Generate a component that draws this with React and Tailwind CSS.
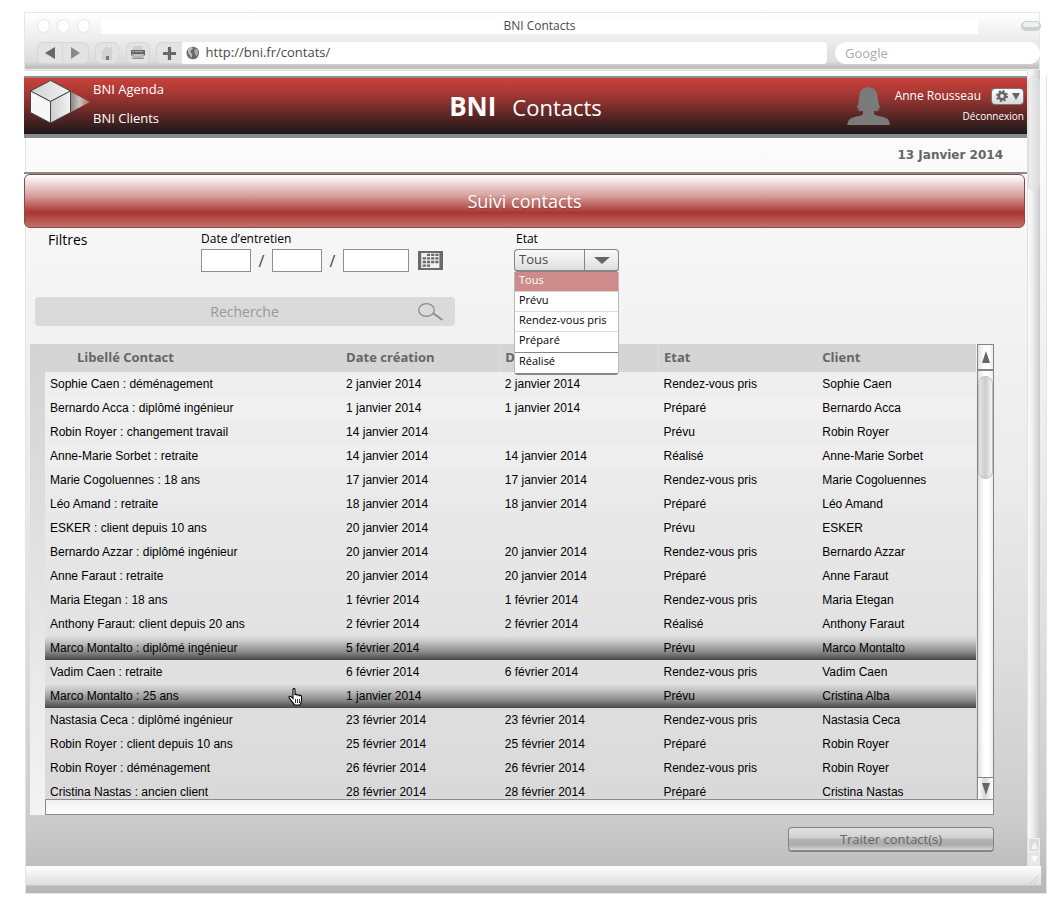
import React from "react";

const rows = [
  ["Sophie Caen : déménagement", "2 janvier 2014", "2 janvier 2014", "Rendez-vous pris", "Sophie Caen"],
  ["Bernardo Acca : diplômé ingénieur", "1 janvier 2014", "1 janvier 2014", "Préparé", "Bernardo Acca"],
  ["Robin Royer : changement travail", "14 janvier 2014", "", "Prévu", "Robin Royer"],
  ["Anne-Marie Sorbet : retraite", "14 janvier 2014", "14 janvier 2014", "Réalisé", "Anne-Marie Sorbet"],
  ["Marie Cogoluennes : 18 ans", "17 janvier 2014", "17 janvier 2014", "Rendez-vous pris", "Marie Cogoluennes"],
  ["Léo Amand : retraite", "18 janvier 2014", "18 janvier 2014", "Préparé", "Léo Amand"],
  ["ESKER : client depuis 10 ans", "20 janvier 2014", "", "Prévu", "ESKER"],
  ["Bernardo Azzar : diplômé ingénieur", "20 janvier 2014", "20 janvier 2014", "Rendez-vous pris", "Bernardo Azzar"],
  ["Anne Faraut : retraite", "20 janvier 2014", "20 janvier 2014", "Préparé", "Anne Faraut"],
  ["Maria Etegan : 18 ans", "1 février 2014", "1 février 2014", "Rendez-vous pris", "Maria Etegan"],
  ["Anthony Faraut: client depuis 20 ans", "2 février 2014", "2 février 2014", "Réalisé", "Anthony Faraut"],
  ["Marco Montalto : diplômé ingénieur", "5 février 2014", "", "Prévu", "Marco Montalto"],
  ["Vadim Caen : retraite", "6 février 2014", "6 février 2014", "Rendez-vous pris", "Vadim Caen"],
  ["Marco Montalto : 25 ans", "1 janvier 2014", "", "Prévu", "Cristina Alba"],
  ["Nastasia Ceca : diplômé ingénieur", "23 février 2014", "23 février 2014", "Rendez-vous pris", "Nastasia Ceca"],
  ["Robin Royer : client depuis 10 ans", "25 février 2014", "25 février 2014", "Préparé", "Robin Royer"],
  ["Robin Royer : déménagement", "26 février 2014", "26 février 2014", "Rendez-vous pris", "Robin Royer"],
  ["Cristina Nastas : ancien client", "28 février 2014", "28 février 2014", "Préparé", "Cristina Nastas"],
];
const selected = [11, 13];
const states = ["Tous", "Prévu", "Rendez-vous pris", "Préparé", "Réalisé"];

function ToolButton({ label, className, children }) {
  return (
    <button
      type="button"
      aria-label={label}
      className={"flex h-[22px] items-center justify-center border border-[#d6d6d6] bg-[#e3e3e3] " + className}
    >
      {children}
    </button>
  );
}

function BrowserBar() {
  return (
    <header className="mr-[7px] flex flex-col gap-2 border border-b-[#dedede] border-[#e6e6e6] bg-[linear-gradient(#ffffff_0%,#ededed_45%,#dcdcdc_85%,#b9b9b9_97%,#ffffff_100%)] pt-[5px] pb-[6px]">
      <div className="flex h-4 items-center">
        <div className="ml-3 flex gap-[7px]">
          <span className="h-[14px] w-[13px] rounded-full border border-[#e4e4e4] bg-white" />
          <span className="h-[14px] w-[13px] rounded-full border border-[#e4e4e4] bg-white" />
          <span className="h-[14px] w-[13px] rounded-full border border-[#e4e4e4] bg-white" />
        </div>
        <div className="ml-[11px] flex h-4 flex-1 items-center justify-center bg-white text-xs text-[#4a4a4a]">BNI Contacts</div>
        <button
          type="button"
          aria-label="Barre d’outils"
          className="-mr-[2px] ml-[43px] h-[10px] w-5 rounded-md border-2 border-t border-b-4 border-[#cdd0d0] bg-[#eef1f1]"
        />
      </div>
      <div className="flex h-[22px] items-center">
        <ToolButton label="Page précédente" className="ml-3 w-[26px] rounded-l-md">
          <svg width="10" height="12" viewBox="0 0 10 12"><path d="M10 0v12L0 6z" fill="#666" /></svg>
        </ToolButton>
        <ToolButton label="Page suivante" className="w-[26px] rounded-r-md border-l-0">
          <svg width="10" height="12" viewBox="0 0 10 12"><path d="M0 0v12l9-6z" fill="#8a8a8a" /></svg>
        </ToolButton>
        <ToolButton label="Accueil" className="ml-[6px] w-6 rounded-md">
          <svg width="14" height="14" viewBox="0 0 14 14">
            <path d="M7 0 0 7h2v7h10V7h2l-2-2V1h-2v2z" fill="#d2d2d2" />
            <path d="M6 10h3v4H6z" fill="#777" />
          </svg>
        </ToolButton>
        <ToolButton label="Imprimer" className="ml-[7px] w-6 rounded-md">
          <svg width="14" height="14" viewBox="0 0 14 14">
            <path d="M2 0h10v4H2z" fill="#d0d0d0" />
            <path d="M0 4h14v5.500h-1.500v-1.500h-11v1.500H0z" fill="#666" />
            <path d="M1 5.500h2M4 5.500h8" stroke="#bbb" strokeWidth=".8" />
            <path d="M2.500 9h9l1 3.500h-11z" fill="#fff" stroke="#777" strokeWidth=".8" />
            <path d="M3 11h8" stroke="#666" />
          </svg>
        </ToolButton>
        <ToolButton label="Ajouter un signet" className="ml-[6px] w-[26px] rounded-l-md border-r-0">
          <svg width="13" height="13" viewBox="0 0 13 13"><path d="M6.500 0v13M0 6.500h13" stroke="#666" strokeWidth="3.200" /></svg>
        </ToolButton>
        <label className="flex h-[22px] flex-1 items-center gap-[6px] rounded-r bg-white pl-1">
          <svg width="14" height="14" viewBox="0 0 14 14" aria-hidden="true">
            <circle cx="7" cy="7" r="6.500" fill="#666" />
            <path d="M2 3c1-1.500 3-2.300 4-2.300l1.200 1.800L5.500 4l-1 2L6.500 8 6 11 5 12.500 4 9.500 2 7z" fill="#b9b9b9" />
            <path d="M9 2.500l2.500.8L13 6l-1 3-1.500 1.500L9.500 8 8.500 6.500l.2-2z" fill="#a8a8a8" />
          </svg>
          <input
            type="text"
            aria-label="Adresse"
            defaultValue="http://bni.fr/contats/"
            className="w-full min-w-0 bg-transparent text-[13px] text-[#4a4a4a] outline-none"
          />
        </label>
        <input
          type="search"
          aria-label="Recherche Google"
          placeholder="Google"
          className="-mr-px ml-2 h-[22px] w-[205px] rounded-full bg-white px-[10px] text-[13px] outline-none placeholder:text-[#ababab]"
        />
      </div>
    </header>
  );
}

function Cube() {
  return (
    <svg width="62" height="46" viewBox="0 0 62 46" aria-hidden="true" className="shrink-0">
      <defs>
        <linearGradient id="beak"><stop offset="0" stopColor="#8f8585" /><stop offset=".45" stopColor="#c9c4c4" /><stop offset="1" stopColor="#a86660" /></linearGradient>
        <linearGradient id="cubeTop"><stop offset="0" stopColor="#d2d2d2" /><stop offset="1" stopColor="#f2f2f2" /></linearGradient>
        <linearGradient id="cubeSide"><stop offset="0" stopColor="#cdcdcd" /><stop offset="1" stopColor="#f4f4f4" /></linearGradient>
      </defs>
      <path d="M42 13 61 23 42 33z" fill="url(#beak)" />
      <g stroke="#454545" strokeWidth="1" strokeLinejoin="round">
        <path d="M21.500 1.500 41.500 12 21.500 22.500 1.500 12z" fill="url(#cubeTop)" />
        <path d="M1.500 12 21.500 22.500V44L1.500 33.500z" fill="#f7f7f7" />
        <path d="M41.500 12 21.500 22.500V44l20-10.500z" fill="url(#cubeSide)" />
      </g>
    </svg>
  );
}

function AppHeader() {
  return (
    <div className="-ml-[2px] grid h-[62px] grid-cols-[1fr_auto_1fr] border-t-2 border-b-4 border-t-[#8b8d8d] border-b-[#8b8b8b] bg-[linear-gradient(#cf433c,#a33733_30%,#1d1819_93%)] bg-origin-border text-white">
      <div className="flex pt-px pl-[5px]">
        <Cube />
        <nav className="flex flex-col gap-[11px] pl-[2px] text-[13px] leading-[18px]">
          <a href="#agenda" className="pt-px">BNI Agenda</a>
          <a href="#clients">BNI Clients</a>
        </nav>
      </div>
      <h1 className="flex items-baseline gap-4 pt-2 leading-10">
        <span className="text-[26px] font-bold">BNI</span>
        <span className="text-[22px]">Contacts</span>
      </h1>
      <div className="flex justify-end gap-[5px] pt-[9px] pr-[3px]">
        <svg width="43" height="38" viewBox="0 0 43 38" aria-hidden="true" className="shrink-0">
          <path d="M21.300.3c-6 0-9 4-9.300 10-.2 4-.3 7-2.500 10.500l2.500-.5-2.200 2.700 3-.7-1.300 2.200 4.500-.8v3.500c-2 2.500-11 2-13.500 5.300C1 34 .4 36 .4 38h42.400c0-2-.5-4-1.600-5.500C38.700 29.500 29 29.500 27 27v-3.300l4.300.8-1.300-2.200 3 .6-1.800-2.500 2.500.4C31.500 18 31 14 30.700 10.300 30.300 4.300 27.300.3 21.300.3z" fill="#7b7b7b" />
        </svg>
        <div className="flex flex-col items-end gap-[3px]">
          <div className="flex items-center gap-[10px]">
            <span className="text-xs leading-[18px]">Anne Rousseau</span>
            <button type="button" aria-label="Paramètres" className="flex h-[17px] w-[33px] items-center justify-center gap-1 rounded border border-[#777] bg-linear-to-b from-white to-[#d8d8d8]">
              <svg width="12" height="12" viewBox="0 0 12 12">
                <circle cx="6" cy="6" r="3.200" fill="none" stroke="#666" strokeWidth="2.600" />
                <circle cx="6" cy="6" r="5" fill="none" stroke="#666" strokeWidth="2" strokeDasharray="2 1.927" />
              </svg>
              <svg width="8" height="7" viewBox="0 0 8 7"><path d="M0 0h8L4 7z" fill="#666" /></svg>
            </button>
          </div>
          <a href="#deconnexion" className="text-[10px] leading-4">Déconnexion</a>
        </div>
      </div>
    </div>
  );
}

function Filters() {
  return (
    <form className="pl-[9px]">
      <div className="grid grid-cols-[153px_313px_auto] pt-[3px] pl-[13px]">
        <h3 className="text-sm leading-[18px] text-black">Filtres</h3>
        <fieldset>
          <legend className="mb-[3px] text-xs leading-[15px] text-black">Date d’entretien</legend>
          <div className="flex h-[23px] items-center text-base text-[#444]">
            <input type="text" aria-label="Jour" className="h-[23px] w-[50px] border border-[#8f8f8f] bg-white px-1 text-xs" />
            <span className="w-[21px] text-center">/</span>
            <input type="text" aria-label="Mois" className="h-[23px] w-[50px] border border-[#8f8f8f] bg-white px-1 text-xs" />
            <span className="w-[21px] text-center">/</span>
            <input type="text" aria-label="Année" className="h-[23px] w-[66px] border border-[#8f8f8f] bg-white px-1 text-xs" />
            <button type="button" aria-label="Ouvrir le calendrier" className="ml-[9px]">
              <svg width="25" height="19" viewBox="0 0 25 19" className="block">
                <path d="M0 0h25v19H0z" fill="#6a6a6a" />
                <path d="M3.200 2h18.200v15H3.200z" fill="#f1f1f1" />
                <g stroke="#6a6a6a" strokeWidth="2.300" strokeDasharray="3.200 1">
                  <path d="M8.900 3.900h12M4.700 7.400h16.200M4.700 11h16.200M4.700 14.600h7.800" />
                </g>
              </svg>
            </button>
          </div>
        </fieldset>
        <div className="text-xs">
          <label htmlFor="etat" className="mb-[3px] block pl-[2px] leading-[15px] text-black">Etat</label>
          <div className="relative z-10 w-[105px]">
            <select
              id="etat"
              defaultValue="Tous"
              className="block h-[23px] w-full appearance-none rounded border border-b-2 border-[#858585] bg-linear-to-b from-[#fafafa] to-[#dedede] pl-1 text-[13px] text-[#4a4a4a]"
            >
              {states.map((s) => (
                <option key={s}>{s}</option>
              ))}
            </select>
            <span className="pointer-events-none absolute top-px right-px flex h-5 w-[34px] items-center justify-center border-l border-[#858585]">
              <svg width="16" height="7" viewBox="0 0 16 7"><path d="M0 0h16L8 7z" fill="#666" /></svg>
            </span>
            <ul role="listbox" aria-label="Etat" className="absolute top-full left-0 w-full rounded-b border border-t-0 border-b-2 border-[#b9b9b9] border-b-[#858585] bg-white text-[11px] leading-4 text-black">
              {states.map((s, i) => (
                <li
                  key={s}
                  role="option"
                  aria-selected={i === 0}
                  className={
                    "border-b pl-1 " +
                    (i === 0
                      ? "h-5 border-[#e0d0d0] bg-[#cd8b8b] text-white"
                      : i === 3
                        ? "h-[21px] border-[#858585]"
                        : i === 4
                          ? "h-5 border-white"
                          : "h-5 border-[#dcdcdc]")
                  }
                >
                  {s}
                </li>
              ))}
            </ul>
          </div>
        </div>
      </div>
      <label className="mt-[25px] flex h-[29px] w-[420px] items-center rounded bg-[#dadada] pr-3">
        <input
          type="text"
          aria-label="Recherche"
          placeholder="Recherche"
          className="h-full min-w-0 flex-1 bg-transparent pl-9 text-center text-sm outline-none placeholder:text-[#989898]"
        />
        <svg width="25" height="18" viewBox="0 0 25 18" aria-hidden="true" fill="none" stroke="#8a8a8a" strokeWidth="1.200">
          <ellipse cx="8.500" cy="7" rx="7.800" ry="6.300" />
          <path d="M15.500 10.500 24.500 17" strokeWidth="1.600" />
        </svg>
      </label>
    </form>
  );
}

function ContactRow({ row, index }) {
  const isSelected = selected.includes(index);
  const tone = isSelected
    ? "bg-[linear-gradient(#e0e0e0,#c4c4c4_25%,#8c8c8c_65%,#484848)]"
    : index === 1 || index === 3
      ? "bg-white/15"
      : "";
  return (
    <tr>
      {row.map((cell, c) => (
        <td key={c} className={"relative h-6 truncate p-0 pl-[5px] " + tone}>
          {cell}
          {index === 13 && c === 0 && (
            <svg width="15" height="18" viewBox="0 0 15 18" aria-hidden="true" className="absolute top-1 right-[38px]">
              <path
                d="M5 1.500c0-1.300 2-1.300 2 0V7c.3-1 2-.9 2.200.2.500-.8 2-.6 2.200.5.700-.6 2.100-.3 2.100.8v4c0 1.500-1 2.500-1.300 4.500H6.300C5.500 14.500 3 12.500 1.300 10.300.3 8.800 1.800 7.700 3 8.700l2 1.800z"
                fill="#fff"
                stroke="#000"
                strokeWidth="1.100"
              />
              <path d="M7.500 11v4M9.500 11v4M11.500 11v4" stroke="#000" strokeWidth=".8" />
            </svg>
          )}
        </td>
      ))}
    </tr>
  );
}

function ContactTable() {
  return (
    <section className="mt-[18px] mr-[33px] ml-1 flex bg-linear-to-b from-[#d3d3d3] to-[#f3f3f3] bg-[length:15px_100%] bg-no-repeat pl-[15px]">
      <div className="min-w-0 flex-1">
        <div className="flex h-[455px]">
          <div className="min-w-0 flex-1 overflow-hidden bg-[linear-gradient(#f0f0f0,#ededed_20%,#d9d9d9)]">
            <table className="w-full table-fixed border-collapse font-['Liberation_Sans',Arial,sans-serif] text-xs text-black">
              <colgroup>
                <col className="w-[31.8%]" />
                <col />
                <col />
                <col />
                <col />
              </colgroup>
              <thead className="bg-[#d5d5d5] text-left font-['Open_Sans',sans-serif] text-[13px] text-[#666]">
                <tr>
                  <th className="h-7 p-0 pl-8 font-bold">Libellé Contact</th>
                  <th className="p-0 pl-[5px] font-bold">Date création</th>
                  <th className="border-l border-[#dddddd] p-0 pl-[5px] font-bold">Date entretien</th>
                  <th className="border-l border-[#dddddd] p-0 pl-[5px] font-bold">Etat</th>
                  <th className="p-0 pl-[5px] font-bold">Client</th>
                </tr>
              </thead>
              <tbody>
                {rows.map((row, i) => (
                  <ContactRow key={i} row={row} index={i} />
                ))}
              </tbody>
            </table>
          </div>
          <div className="ml-px flex w-[17px] flex-col border border-b-0 border-[#858585] bg-[linear-gradient(90deg,#e0e0e0,#ffffff_40%,#ffffff_70%,#ececec)]">
            <button type="button" aria-label="Défiler vers le haut" className="flex h-[26px] items-center justify-center border-b-2 border-[#858585]">
              <svg width="8" height="12" viewBox="0 0 8 12"><path d="M4 0l4 12H0z" fill="#666" /></svg>
            </button>
            <div className="mt-[5px] h-[103px] rounded-full border border-[#bdbdbd] bg-[linear-gradient(90deg,#e6e6e6,#cccccc_50%,#f5f5f5)]" />
            <button type="button" aria-label="Défiler vers le bas" className="mt-auto flex h-[22px] items-center justify-center border-t border-[#858585] bg-[linear-gradient(90deg,#ffffff,#d8d8d8_45%,#ffffff)]">
              <svg width="8" height="12" viewBox="0 0 8 12"><path d="M0 0h8L4 12z" fill="#666" /></svg>
            </button>
          </div>
        </div>
        <div className="h-4 border border-[#8d8d8d] bg-linear-to-b from-[#f0f0f0] to-white" />
      </div>
    </section>
  );
}

function PageScrollbar() {
  return (
    <div className="-mt-[6px] mr-[6px] flex w-[13px] shrink-0 flex-col border-l border-[#e2e2e2] bg-[linear-gradient(90deg,#fbfbfb,#eeeeee_40%,#c9c9c9)]">
      <div className="mt-[6px] h-[115px] rounded-full border border-[#dcdcdc] bg-[linear-gradient(90deg,#efefef,#dadada)]" />
      <button type="button" aria-label="Page vers le haut" className="mt-auto flex h-[14px] items-center justify-center border border-[#f2f2f2] bg-[#dcdcdc]">
        <svg width="7" height="7" viewBox="0 0 7 7"><path d="M3.500 0 7 7H0z" fill="#f5f5f5" /></svg>
      </button>
      <button type="button" aria-label="Page vers le bas" className="flex h-[14px] items-center justify-center bg-[#e8e8e8]">
        <svg width="7" height="7" viewBox="0 0 7 7"><path d="M0 0h7L3.500 7z" fill="#fafafa" /></svg>
      </button>
    </div>
  );
}

export default function App() {
  return (
    <div className="bg-white pt-3 pr-[10px] pb-[11px] pl-6 font-['Open_Sans',sans-serif]">
      <BrowserBar />
      <div className="mt-[5px] ml-px border-r border-b border-l border-[#e4e4e4] bg-[linear-gradient(#fefefe,#f2f2f2_31%,#ececec_48%,#e0e0e0_67%,#cccccc_91%,#b6b6b6)]">
        <div className="flex">
          <main className="min-w-0 flex-1">
            <AppHeader />
            <div className="flex h-[34px] items-center justify-end pr-6 pb-px font-['DejaVu_Sans',sans-serif] text-xs font-bold text-[#666]">
              13 Janvier 2014
            </div>
            <div className="-ml-[2px] border-t-2 border-[#8b8b8b] pr-[2px]">
              <h2 className="flex h-[54px] items-center justify-center rounded-md border border-[#8c4a47] bg-[linear-gradient(#ffffff,#d8a5a2_38%,#a93631_72%,#c2706b)] text-lg text-white text-shadow-xs">
                Suivi contacts
              </h2>
            </div>
            <Filters />
            <ContactTable />
            <div className="flex justify-end pt-3 pr-[33px] pb-[14px]">
              <button type="button" className="h-[25px] w-[206px] rounded-sm border border-b-2 border-[#858585] bg-[linear-gradient(#e2e2e2,#d0d0d0_45%,#b4b4b4_50%,#adadad_78%,#d8d8d8)] text-[13px] leading-[22px] text-[#666]">
                Traiter contact(s)
              </button>
            </div>
          </main>
          <PageScrollbar />
        </div>
        <footer className="mr-[5px] flex h-5 items-end justify-end border-b border-[#c8c8c8] bg-linear-to-b from-white to-[#dddddd]">
          <svg width="12" height="12" viewBox="0 0 12 12" aria-hidden="true"><path d="M1 11 10 2M5 11l5-5" stroke="#ccc" /></svg>
        </footer>
        <div className="h-[7px]" />
      </div>
    </div>
  );
}
